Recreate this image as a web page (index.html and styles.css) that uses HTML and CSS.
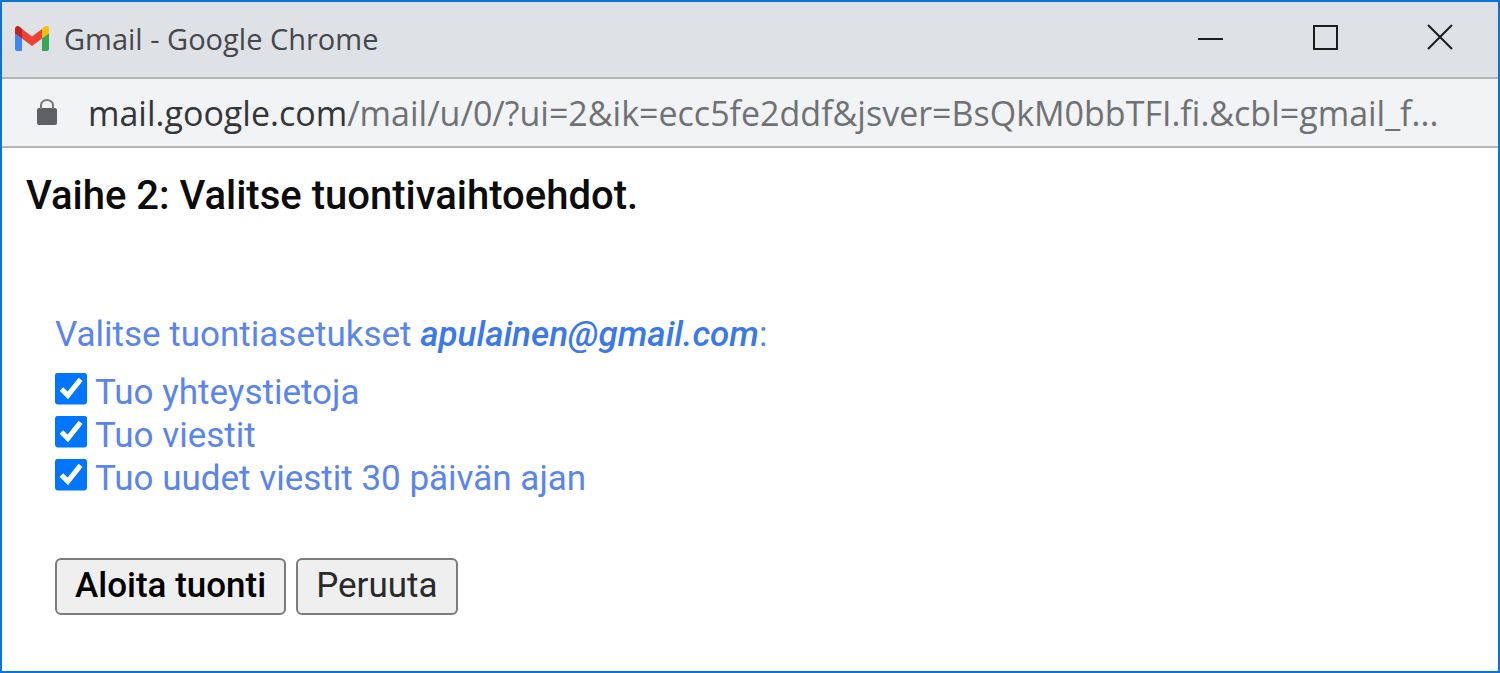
FILE: index.html
```html
<!DOCTYPE html>
<html lang="fi">
<head>
<meta charset="utf-8">
<title>Gmail</title>
<link rel="stylesheet" href="styles.css">
</head>
<body>
<div class="window">
  <header class="titlebar">
    <svg class="logo" viewBox="0 0 36 27" aria-hidden="true">
      <path fill="#4285f4" d="M1 8l7 5v13H3Q1 26 1 24z"/>
      <path fill="#34a853" d="M28 13l7-5v16Q35 26 33 26H28z"/>
      <path fill="#ea4335" d="M8 4l10 7.500L28 4v9.500L18 21 8 13.500z"/>
      <path fill="#fbbc04" d="M28 4l2-2c2.500-2 5-1 5 2v4.500l-7 5z"/>
      <path fill="#c5221f" d="M1 4c0-3 3-4 5-2l2 2v9.500l-7-5z"/>
    </svg>
    <span class="title">Gmail - Google Chrome</span>
    <div class="controls">
      <button class="control" type="button" aria-label="Pienennä"><svg viewBox="0 0 26 26"><path d="M0 14h25"/></svg></button>
      <button class="control" type="button" aria-label="Suurenna"><svg viewBox="0 0 26 26"><path d="M1 1h23v23H1z"/></svg></button>
      <button class="control" type="button" aria-label="Sulje"><svg viewBox="0 0 26 26"><path d="M0 0l24 24M24 0L0 24"/></svg></button>
    </div>
  </header>
  <div class="addressbar">
    <svg class="lock" viewBox="0 0 20 28" aria-hidden="true">
      <rect x="0" y="9" width="20" height="17" rx="2" fill="#5f6063"/>
      <path d="M4 10V6a6 5 0 0 1 12 0v4" fill="none" stroke="#77787b" stroke-width="2"/>
    </svg>
    <div class="url"><span class="host">mail.google.com</span>/mail/u/0/?ui=2&amp;ik=ecc5fe2ddf&amp;jsver=BsQkM0bbTFI.fi.&amp;cbl=gmail_f...</div>
  </div>
  <main class="page">
    <h1 class="heading">Vaihe 2: Valitse tuontivaihtoehdot.</h1>
    <form class="form">
      <p class="intro">Valitse tuontiasetukset <em class="account">apulainen@gmail.com</em>:</p>
      <div class="options">
        <label class="option"><input class="check" type="checkbox" checked>Tuo yhteystietoja</label>
        <label class="option"><input class="check" type="checkbox" checked>Tuo viestit</label>
        <label class="option"><input class="check" type="checkbox" checked>Tuo uudet viestit 30 päivän ajan</label>
      </div>
      <div class="actions">
        <button class="button primary" type="button">Aloita tuonti</button>
        <button class="button" type="button">Peruuta</button>
      </div>
    </form>
  </main>
</div>
</body>
</html>
```
FILE: styles.css
```css
* { box-sizing: border-box; }

body {
  margin: 0;
  font-family: Roboto, "Liberation Sans", sans-serif;
  background: #fff;
}

.window {
  min-height: 100vh;
  border: 2px solid #0a75d6;
}

.titlebar {
  display: flex;
  align-items: center;
  height: 77px;
  padding: 0 0 3px 12px;
  background: #dee1e6;
  border-bottom: 2px solid #b5b6b8;
}

.logo { width: 36px; height: 27px; }

.title {
  flex: 1;
  margin-left: 14px;
  font: 29px "Open Sans", "Noto Sans", sans-serif;
  color: #45474b;
}

.controls { display: flex; }

.control {
  display: flex;
  align-items: center;
  justify-content: center;
  width: 115px;
  height: 72px;
  padding: 0;
  border: 0;
  background: none;
}

.control svg {
  width: 26px;
  height: 26px;
  fill: none;
  stroke: #1c1c1d;
  stroke-width: 2;
  overflow: visible;
}

.addressbar {
  display: flex;
  align-items: center;
  height: 69px;
  padding: 0 35px;
  background: #f1f3f4;
  border-bottom: 2px solid #b5b6b8;
}

.lock { flex: none; width: 20px; height: 28px; }

.url {
  margin-left: 31px;
  overflow: hidden;
  white-space: nowrap;
  font: 34px "Open Sans", "Noto Sans", sans-serif;
  color: #6f7175;
}

.host { color: #34363a; }

.page { padding: 24px; }

.heading {
  margin: 0;
  font-size: 40px;
  font-weight: 500;
  line-height: 48px;
  color: #0c0c0c;
}

.form {
  margin: 93px 0 0 29px;
  font-size: 35px;
  color: #5a85ef;
}

.intro { margin: 0 0 14px; line-height: 44px; }

.account { font-weight: 500; color: #3b78ec; }

.options { display: grid; justify-items: start; }

.option {
  display: flex;
  align-items: center;
  gap: 8px;
  line-height: 43px;
}

.check {
  width: 32px;
  height: 32px;
  margin: 0 0 8px;
  accent-color: #0075ff;
  clip-path: inset(0 round 3px);
}

.actions { display: flex; gap: 10px; margin-top: 58px; }

.button {
  height: 57px;
  padding: 0 18px 2px;
  border: 2px solid #7c7c7c;
  border-radius: 6px;
  background: #efefef;
  font: 35px Roboto, "Liberation Sans", sans-serif;
  color: #2a2a2a;
}

.primary { font-weight: 500; color: #000; }
```
